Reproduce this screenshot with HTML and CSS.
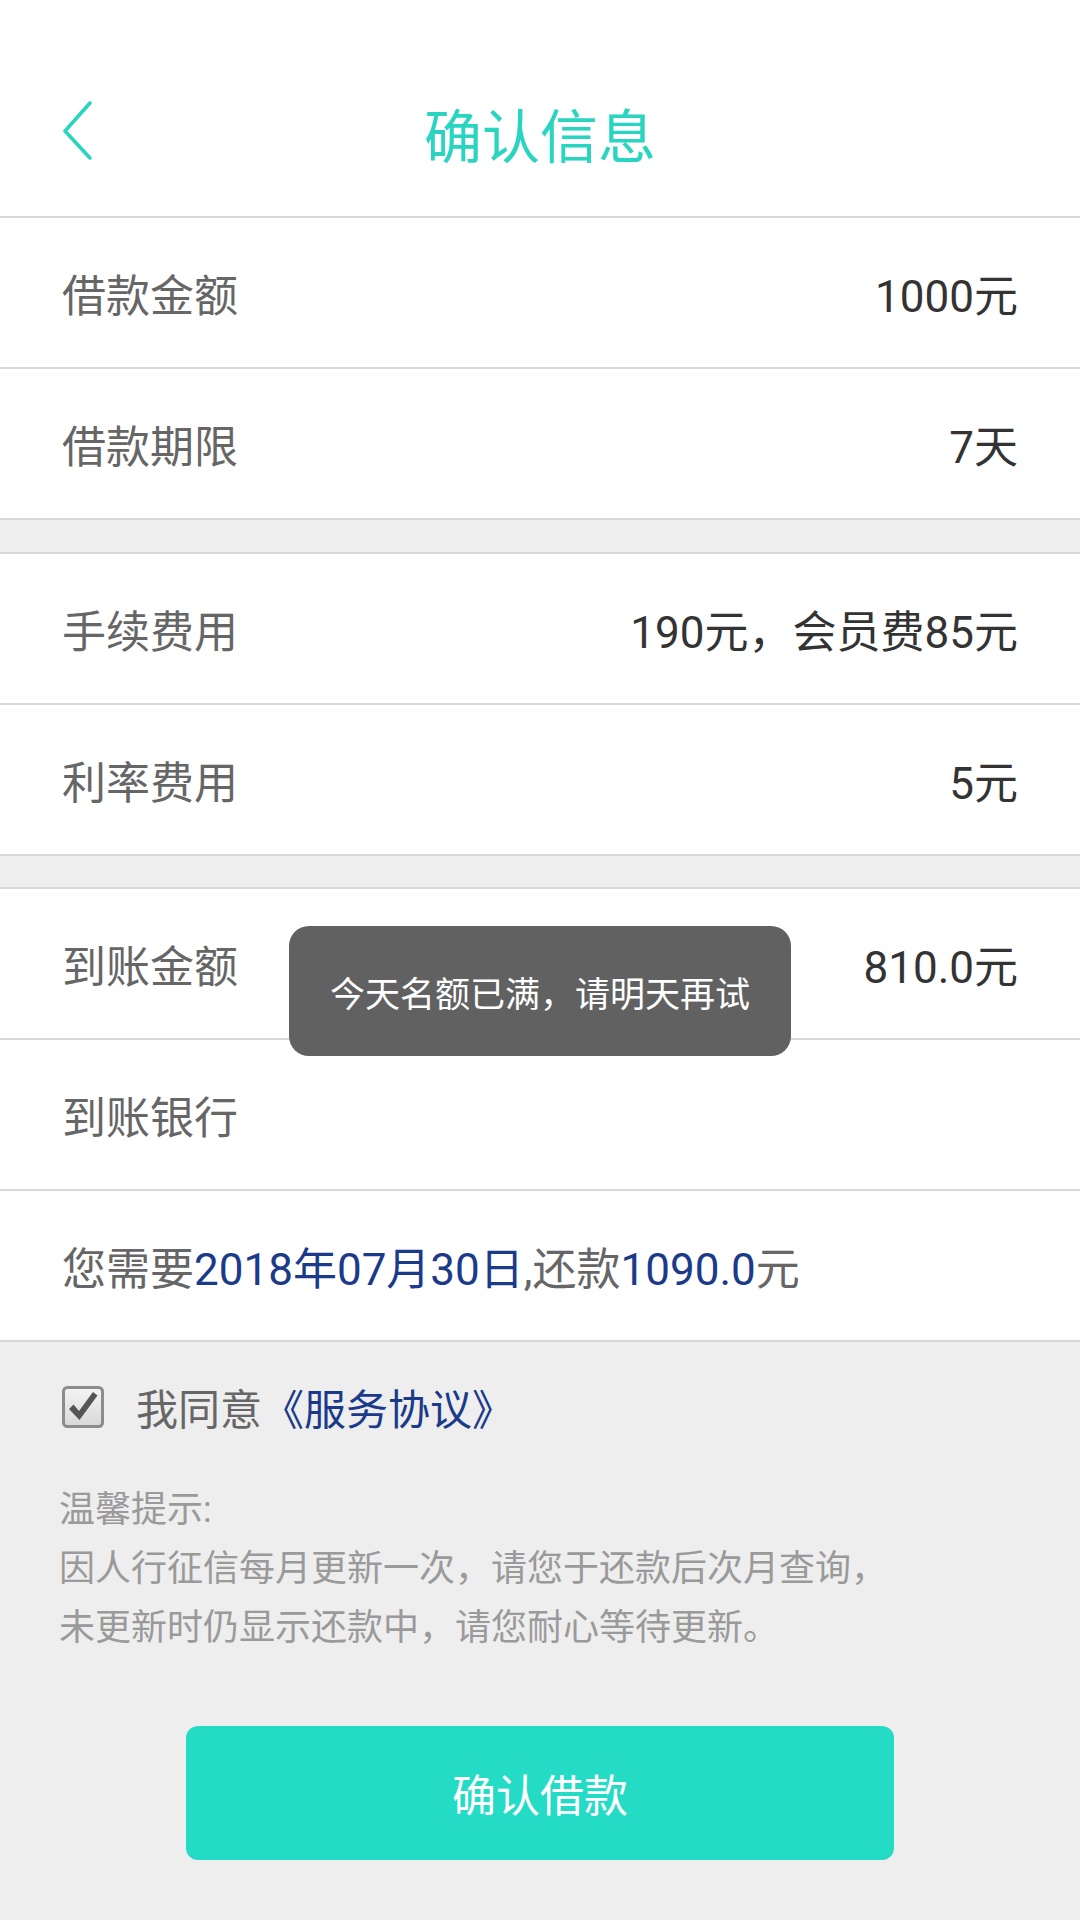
FILE: index.html
```html
<!DOCTYPE html>
<html lang="zh-CN">
<head>
    <meta charset="UTF-8">
    <meta name="viewport" content="width=device-width, initial-scale=1.0">
    <title>确认信息</title>
    <link rel="stylesheet" href="styles.css">
</head>
<body>
    <header class="topbar">
        <a class="back" href="#">
            <svg width="34" height="62" viewBox="0 0 34 62">
                <polyline points="29,3 4,31 29,58" fill="none" stroke="#29d4c0" stroke-width="3.6" stroke-linecap="round" stroke-linejoin="round"/>
            </svg>
        </a>
        <h1>确认信息</h1>
    </header>

    <div class="row">
        <span class="label">借款金额</span>
        <span class="value">1000元</span>
    </div>
    <div class="row">
        <span class="label">借款期限</span>
        <span class="value">7天</span>
    </div>
    <div class="gap"></div>
    <div class="row">
        <span class="label">手续费用</span>
        <span class="value">190元，会员费85元</span>
    </div>
    <div class="row">
        <span class="label">利率费用</span>
        <span class="value">5元</span>
    </div>
    <div class="gap gap-sm"></div>
    <div class="row">
        <span class="label">到账金额</span>
        <span class="value">810.0元</span>
    </div>
    <div class="row">
        <span class="label">到账银行</span>
        <span class="value"></span>
    </div>
    <div class="row">
        <span class="label">您需要<em>2018年07月30日</em>,还款<em>1090.0</em>元</span>
    </div>

    <div class="bottom">
        <label class="agree">
            <svg width="42" height="42" viewBox="0 0 42 42">
                <defs>
                    <linearGradient id="boxfill" x1="0" y1="0" x2="0" y2="1">
                        <stop offset="0" stop-color="#f4f4f4"/>
                        <stop offset="1" stop-color="#d8d8d8"/>
                    </linearGradient>
                </defs>
                <rect x="1.5" y="1.5" width="39" height="39" rx="4" fill="url(#boxfill)" stroke="#8c8c8c" stroke-width="3"/>
                <path d="M7 23 L11.5 18.5 L17 25 L31 6 L35.5 9.5 L17.5 34 Z" fill="#555"/>
            </svg>
            <span>我同意<em>《服务协议》</em></span>
        </label>

        <div class="tips">
            <p>温馨提示:</p>
            <p>因人行征信每月更新一次，请您于还款后次月查询，</p>
            <p>未更新时仍显示还款中，请您耐心等待更新。</p>
        </div>

        <button class="confirm">确认借款</button>
    </div>

    <div class="toast">今天名额已满，请明天再试</div>
</body>
</html>
```

FILE: styles.css
```css
body {
    margin: 0;
    padding: 0;
    min-height: 1920px;
    background-color: #eeeeee;
    font-family: Roboto, "Noto Sans CJK SC", sans-serif;
    position: relative;
}
.topbar {
    box-sizing: border-box;
    height: 218px;
    padding-top: 50px;
    background-color: white;
    border-bottom: 2px solid #d8d8d8;
    display: grid;
    grid-template-columns: 1fr auto 1fr;
    align-items: center;
}
.back {
    display: flex;
    padding-left: 61px;
    margin-top: -4px;
}
.topbar h1 {
    margin: 0;
    font-size: 58px;
    font-weight: normal;
    color: #29d4c0;
}
.row {
    box-sizing: border-box;
    height: 151px;
    padding: 0 62px;
    background-color: white;
    border-bottom: 2px solid #d8d8d8;
    display: flex;
    align-items: center;
    justify-content: space-between;
    font-size: 44px;
}
.label {
    color: #666666;
}
.value {
    color: #333333;
}
.row em,
.agree em {
    font-style: normal;
    color: #1b3a8a;
}
.gap {
    height: 32px;
    border-bottom: 2px solid #d8d8d8;
}
.gap-sm {
    height: 31px;
}
.bottom {
    padding-top: 34px;
}
.agree {
    display: flex;
    align-items: center;
    gap: 32px;
    padding-left: 62px;
    font-size: 42px;
    color: #666666;
}
.tips {
    margin-top: 44px;
    padding-left: 59px;
    font-size: 36px;
    line-height: 59px;
    color: #9a9a9a;
}
.tips p {
    margin: 0;
}
.confirm {
    display: block;
    width: 708px;
    height: 134px;
    margin: 68px auto 0;
    border: none;
    border-radius: 12px;
    background-color: #24dbc6;
    color: white;
    font-family: inherit;
    font-size: 44px;
}
.toast {
    position: absolute;
    top: 926px;
    left: 50%;
    transform: translateX(-50%);
    width: 502px;
    height: 130px;
    border-radius: 20px;
    background-color: #616161;
    color: white;
    font-size: 35px;
    display: flex;
    align-items: center;
    justify-content: center;
}
```
